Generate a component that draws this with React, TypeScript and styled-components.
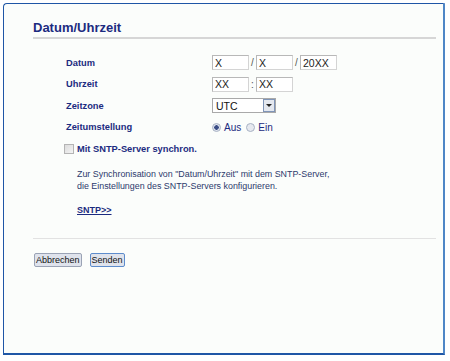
import React, { FC } from "react";
import styled, { createGlobalStyle } from "styled-components";

const GlobalStyle = createGlobalStyle`
  html, body {
    margin: 0;
    padding: 0;
    background: #ffffff;
  }
  body {
    font-family: "Liberation Sans", Arial, sans-serif;
  }
`;

const Frame = styled.div`
  box-sizing: border-box;
  margin: 3px 0 0 3px;
  width: 442px;
  height: 352px;
  border: 1px solid #1f56a6;
  border-right: 2px solid #4f86c6;
  border-bottom: 2px solid #1f56a6;
  border-top-left-radius: 4px;
  background: #fbfdfb;
  padding: 16px 7px 0 29px;
`;

const Title = styled.h1`
  margin: 0;
  font-size: 13px;
  font-weight: bold;
  color: #1c2b80;
  line-height: 16px;
  padding-bottom: 1px;
  border-bottom: 2px solid #d6d6d6;
`;

const Form = styled.div`
  padding: 13px 0 0 33px;
`;

const Row = styled.div`
  display: grid;
  grid-template-columns: 146px auto;
  align-items: center;
  height: 21.5px;
`;

const Label = styled.span`
  font-size: 9.3px;
  font-weight: bold;
  color: #1c2b80;
`;

const Fields = styled.div`
  display: flex;
  align-items: center;
`;

const TextBox = styled.input`
  box-sizing: border-box;
  width: 37px;
  height: 15px;
  margin: 0;
  padding: 0 2px;
  border: 1px solid #d4d4d4;
  border-top-color: #b8b8b8;
  border-left-color: #b8b8b8;
  background: #ffffff;
  font-family: "Liberation Sans", Arial, sans-serif;
  font-size: 10.5px;
  color: #222;
  outline: none;
`;

const Sep = styled.span`
  width: 7px;
  text-align: center;
  font-size: 10px;
  color: #555;
`;

const Select = styled.div`
  box-sizing: border-box;
  width: 64px;
  height: 15px;
  display: flex;
  align-items: center;
  justify-content: space-between;
  border: 1px solid #a9a9a9;
  background: #fff;
  font-size: 10.5px;
  color: #111;
  padding-left: 3px;
`;

const SelectArrow = styled.span`
  box-sizing: border-box;
  width: 12px;
  height: 13px;
  border: 1px solid #7f95b8;
  background: #e4e8ef;
  display: flex;
  align-items: center;
  justify-content: center;
`;

const RadioGroup = styled.label`
  display: flex;
  align-items: center;
  font-size: 10px;
  color: #1c2b80;
  margin-right: 5px;
`;

const RadioDot = styled.span<{ $on?: boolean }>`
  box-sizing: border-box;
  width: 9px;
  height: 9px;
  border-radius: 50%;
  border: 1px solid #a8b2c4;
  background: ${(p) => (p.$on ? "radial-gradient(circle, #3b4e86 0 2px, #dfe4ee 2.5px)" : "#e6e9ef")};
  margin-right: 3px;
`;

const CheckRow = styled.div`
  display: flex;
  align-items: center;
  margin: 6px 0 0 -2px;
`;

const CheckBox = styled.span`
  box-sizing: border-box;
  width: 10px;
  height: 10px;
  border: 1px solid #b4b4b4;
  background: linear-gradient(135deg, #dcdcdc, #f4f4f4);
  margin-right: 3px;
`;

const Note = styled.p`
  margin: 14px 0 0 11px;
  font-size: 8.9px;
  line-height: 12px;
  color: #2c3a6c;
`;

const Link = styled.a`
  display: inline-block;
  margin: 13px 0 0 11px;
  font-size: 9px;
  font-weight: bold;
  color: #1c2b80;
  text-decoration: underline;
`;

const Divider = styled.hr`
  margin: 21px 0 0 0;
  border: none;
  border-top: 1px solid #e2e2e2;
`;

const Buttons = styled.div`
  display: flex;
  gap: 8px;
  margin: 14px 0 0 1px;
`;

const Button = styled.button<{ $focus?: boolean }>`
  box-sizing: border-box;
  height: 14px;
  padding: 0 1px;
  font-family: "Liberation Sans", Arial, sans-serif;
  font-size: 9px;
  line-height: 12px;
  color: #111;
  background: #dfe3ec;
  border: 1px solid ${(p) => (p.$focus ? "#5d8ccc" : "#9aa3b5")};
  border-radius: 2px;
`;

const App: FC = () => {
  return (
    <>
      <GlobalStyle />
      <Frame>
        <Title>Datum/Uhrzeit</Title>
        <Form>
          <Row>
            <Label>Datum</Label>
            <Fields>
              <TextBox defaultValue="X" />
              <Sep>/</Sep>
              <TextBox defaultValue="X" />
              <Sep>/</Sep>
              <TextBox defaultValue="20XX" />
            </Fields>
          </Row>
          <Row>
            <Label>Uhrzeit</Label>
            <Fields>
              <TextBox defaultValue="XX" />
              <Sep>:</Sep>
              <TextBox defaultValue="XX" />
            </Fields>
          </Row>
          <Row>
            <Label>Zeitzone</Label>
            <Fields>
              <Select>
                UTC
                <SelectArrow>
                  <svg width="6" height="4" viewBox="0 0 6 4">
                    <path d="M0 0h6L3 3z" fill="#222" />
                  </svg>
                </SelectArrow>
              </Select>
            </Fields>
          </Row>
          <Row>
            <Label>Zeitumstellung</Label>
            <Fields>
              <RadioGroup>
                <RadioDot $on />
                Aus
              </RadioGroup>
              <RadioGroup>
                <RadioDot />
                Ein
              </RadioGroup>
            </Fields>
          </Row>
          <CheckRow>
            <CheckBox />
            <Label>Mit SNTP-Server synchron.</Label>
          </CheckRow>
          <Note>
            Zur Synchronisation von "Datum/Uhrzeit" mit dem SNTP-Server,
            <br />
            die Einstellungen des SNTP-Servers konfigurieren.
          </Note>
          <Link>SNTP&gt;&gt;</Link>
        </Form>
        <Divider />
        <Buttons>
          <Button>Abbrechen</Button>
          <Button $focus>Senden</Button>
        </Buttons>
      </Frame>
    </>
  );
};

export default App;
